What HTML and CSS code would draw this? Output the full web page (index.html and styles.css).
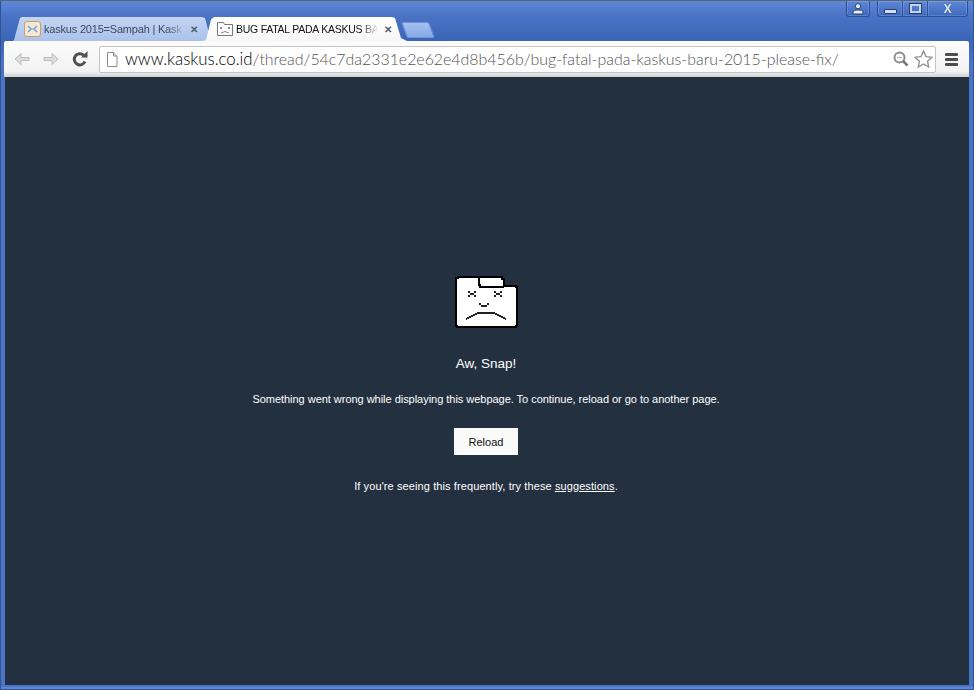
FILE: index.html
```html
<!DOCTYPE html>
<html lang="en">
<head>
    <meta charset="UTF-8">
    <title>BUG FATAL PADA KASKUS BARU 2015</title>
    <link rel="stylesheet" href="styles.css">
</head>
<body>
    <div class="window">
        <!-- caption buttons -->
        <div class="caption">
            <div class="cap-btn cap-profile">
                <svg width="12" height="12" viewBox="0 0 12 12"><circle cx="6" cy="3.200" r="2.600" fill="#e6ecf8" stroke="#24406f"/><path d="M1 11V9.200C1 7.600 3 7 6 7s5 .6 5 2.200V11z" fill="#e6ecf8" stroke="#24406f"/></svg>
            </div>
            <div class="cap-group">
                <div class="cap-btn cap-min"><span class="min-bar"></span></div>
                <div class="cap-btn cap-max"><span class="max-box"></span></div>
                <div class="cap-btn cap-close">X</div>
            </div>
        </div>

        <!-- tab strip -->
        <div class="tabs">
            <div class="tab">
                <svg class="favicon" width="17" height="16" viewBox="0 0 17 16"><rect x=".5" y=".5" width="16" height="15" rx="2.500" fill="#f3e7da" stroke="#d99a58"/><path d="M4 5l3 3-3 3M13 5l-3 3 3 3" fill="none" stroke="#6fa8c8" stroke-width="1.500"/><path d="M6 8h5" stroke="#7fb0cc"/></svg>
                <span class="tab-title">kaskus 2015=Sampah | Kask</span>
                <span class="tab-close">✕</span>
            </div>
            <div class="tab tab-active">
                <svg class="favicon" width="16" height="16" viewBox="0 0 16 16"><path d="M.5 1.500h6l1 2h8v11H.5z" fill="#fff" stroke="#777"/><path d="M3 6l2 2M5 6L3 8M11 6l2 2M13 6l-2 2M4 12q4-3 8 0" fill="none" stroke="#888"/></svg>
                <span class="tab-title">BUG FATAL PADA KASKUS BA</span>
                <span class="tab-close">✕</span>
            </div>
            <div class="new-tab"></div>
        </div>

        <!-- toolbar -->
        <div class="toolbar">
            <div class="nav-btn">
                <svg width="16" height="14" viewBox="0 0 16 14"><path d="M15 5.500H7V1.500L1 7l6 5.500V8.500h8z" fill="#dcdcdc" stroke="#bcbcbc"/></svg>
            </div>
            <div class="nav-btn">
                <svg width="16" height="14" viewBox="0 0 16 14"><path d="M1 5.500h8V1.500L15 7l-6 5.500V8.500H1z" fill="#dcdcdc" stroke="#bcbcbc"/></svg>
            </div>
            <div class="nav-btn">
                <svg width="16" height="16" viewBox="0 0 16 16"><path d="M13 10.500A5.600 5.600 0 1 1 11.500 4" fill="none" stroke="#4e4e4e" stroke-width="3"/><path d="M9 6.500h6.500V0z" fill="#4e4e4e"/></svg>
            </div>
            <div class="omnibox">
                <svg class="page-icon" width="12" height="15" viewBox="0 0 12 15"><path d="M1.500.5h6l3.500 3.500v10.500h-9.500z" fill="#fff" stroke="#8a8a8a"/><path d="M7.500.5v3.500h3.500" fill="#e8e8e8" stroke="#8a8a8a"/></svg>
                <span class="url"><span class="url-host">www.kaskus.co.id</span>/thread/54c7da2331e2e62e4d8b456b/bug-fatal-pada-kaskus-baru-2015-please-fix/</span>
                <svg class="search-icon" width="16" height="16" viewBox="0 0 16 16"><circle cx="6.500" cy="6.500" r="5" fill="none" stroke="#8c8c8c" stroke-width="2"/><path d="M4 6.500h5" stroke="#b5b5b5"/><path d="M10 10l4.500 4.500" stroke="#777" stroke-width="2.500"/></svg>
                <svg class="star-icon" width="19" height="18" viewBox="0 0 19 18"><path d="M9.500 1l2.500 5.600 6 .6-4.500 4 1.300 5.900-5.300-3.100-5.300 3.100 1.300-5.900-4.500-4 6-.6z" fill="#fff" stroke="#8f8f8f" stroke-width="1.300"/></svg>
            </div>
            <div class="menu-btn"><span></span><span></span><span></span></div>
        </div>

        <!-- crashed page -->
        <div class="page">
            <svg class="sad-tab" width="63" height="52" viewBox="0 0 63 52" shape-rendering="crispEdges">
                <path d="M3 1h44v2h2v7h12v1h1v39h-1v1H2v-1H1V2h2z" fill="#fff" stroke="#000" stroke-width="2"/>
                <path d="M24 2v7h1v2h24" fill="none" stroke="#000" stroke-width="2"/>
                <path d="M13 15h2v2h-2zM19 15h2v2h-2zM15 17h4v2h-4zM13 19h2v2h-2zM19 19h2v2h-2zM39 15h2v2h-2zM45 15h2v2h-2zM41 17h4v2h-4zM39 19h2v2h-2zM45 19h2v2h-2z" fill="#222"/>
                <path d="M24 27h2v2h-2zM26 29h6v2h-6zM32 27h2v2h-2z" fill="#222"/>
                <path d="M11 43L23 37H39L51 43" fill="none" stroke="#222" stroke-width="2"/>
            </svg>
            <h1 class="err-title">Aw, Snap!</h1>
            <p class="err-text">Something went wrong while displaying this webpage. To continue, reload or go to another page.</p>
            <button class="reload">Reload</button>
            <p class="err-hint">If you're seeing this frequently, try these <a href="#">suggestions</a>.</p>
        </div>
    </div>
</body>
</html>
```

FILE: styles.css
```css
body {
    margin: 0;
    overflow: hidden;
    font-family: "Liberation Sans", Arial, sans-serif;
}

.window {
    width: 974px;
    height: 690px;
    box-sizing: border-box;
    display: flex;
    flex-direction: column;
    padding: 0 5px 5px 4px;
    background: linear-gradient(#6088d8 0, #4b74c6 14px, #3a64b6 40px, #4a74c6 60px, #4a74c6 100%);
    border-top: 1px solid #55657c;
    box-shadow: inset 1px 0 0 #34528f, inset -1px 0 0 #34528f, inset 0 -1px 0 #34528f, inset 0 -3px 0 #5f86d4;
}

.caption {
    height: 16px;
    display: flex;
    justify-content: flex-end;
    gap: 7px;
}

.cap-group {
    display: flex;
    margin-right: 1px;
}

.cap-btn {
    height: 16px;
    box-sizing: border-box;
    display: flex;
    align-items: center;
    justify-content: center;
    background: linear-gradient(#5f87d6, #3f69bd);
    border: 1px solid #2c4f96;
    border-top: 0;
    box-shadow: inset 0 0 0 1px rgba(255, 255, 255, 0.15);
}

.cap-profile {
    width: 24px;
    border-radius: 0 0 3px 3px;
}

.cap-min {
    width: 25px;
    border-radius: 0 0 0 3px;
    border-right: 0;
    align-items: flex-end;
    padding-bottom: 2px;
}

.cap-max {
    width: 25px;
    border-right: 0;
}

.cap-close {
    width: 41px;
    border-radius: 0 0 3px 0;
    color: #dfe6f5;
    font-size: 12px;
    font-weight: bold;
    text-shadow: 0 0 1px #1d3567;
}

.min-bar {
    width: 11px;
    height: 3px;
    background: #d5deee;
    border: 1px solid #24406f;
    border-radius: 1px;
}

.max-box {
    width: 7px;
    height: 5px;
    border: 2px solid #c6d2e8;
    outline: 1px solid #24406f;
}

.tabs {
    height: 24px;
    display: flex;
    padding-left: 9px;
}

.tab {
    width: 198px;
    height: 24px;
    box-sizing: border-box;
    display: flex;
    align-items: center;
    gap: 3px;
    padding: 0 11px 0 11px;
    font-size: 11px;
    letter-spacing: -0.2px;
    color: #3c4a5e;
    background: linear-gradient(#c4d5f2, #a9c2ec);
    clip-path: polygon(0 100%, 1px 96%, 7px 4%, 9px 0, 189px 0, 192px 4%, 198px 100%);
}

.tab-active {
    width: 204px;
    margin-left: -8px;
    padding-left: 14px;
    padding-right: 17px;
    font-size: 10.500px;
    letter-spacing: -0.25px;
    color: #111;
    background: linear-gradient(#fff, #f7f7f7);
    clip-path: polygon(0 100%, 3px 96%, 8px 10%, 11px 0, 189px 0, 192px 4%, 198px 88%, 204px 100%);
    position: relative;
}

.favicon {
    flex: none;
}

.tab-title {
    flex: 1;
    white-space: nowrap;
    -webkit-mask-image: linear-gradient(to right, #000 88%, transparent);
    mask-image: linear-gradient(to right, #000 88%, transparent);
}

.tab-close {
    flex: none;
    width: 12px;
    font-size: 10px;
    font-weight: bold;
    color: #4f5b6b;
    text-align: center;
}

.new-tab {
    width: 26px;
    height: 14px;
    margin: 5px 0 0 -3px;
    background: linear-gradient(#a7c1ef, #86a9e6);
    border: 1px solid #6f92d6;
    border-radius: 2px;
    transform: skewX(20deg);
}

.toolbar {
    height: 36px;
    box-sizing: border-box;
    display: flex;
    align-items: center;
    padding: 0 10px 0 3px;
    background: linear-gradient(#fcfcfc, #f2f2f2 85%, #cfd2cf);
    border-radius: 2px 2px 0 0;
}

.nav-btn {
    width: 29px;
    display: flex;
    justify-content: center;
}

.omnibox {
    flex: none;
    width: 837px;
    height: 27px;
    box-sizing: border-box;
    margin-left: 5px;
    display: flex;
    align-items: center;
    padding: 0 2px 0 6px;
    background: #fff;
    border: 1px solid #c4c4c4;
    border-radius: 2px;
}

.page-icon {
    flex: none;
}

.url {
    flex: 1;
    margin: 0 0 2px 7px;
    white-space: nowrap;
    font-family: "Lato", sans-serif;
    font-weight: 300;
    font-size: 15.900px;
    color: #555;
}

.url-host {
    font-size: 16.800px;
    color: #000;
}

.search-icon {
    flex: none;
    margin-right: 5px;
}

.star-icon {
    flex: none;
}

.menu-btn {
    margin-left: 9px;
    display: flex;
    flex-direction: column;
    gap: 2px;
}

.menu-btn span {
    display: block;
    width: 13px;
    height: 3px;
    background: #4d4d4d;
    border-radius: 1px;
}

.page {
    flex: 1;
    display: flex;
    flex-direction: column;
    align-items: center;
    margin-left: 1px;
    padding: 199px 1px 0 0;
    margin-right: 0;
    background: #233040;
    color: #fff;
    font-size: 11px;
    transform: translateX(0);
}

.sad-tab {
    display: block;
    margin-left: -1px;
}

.err-title {
    margin: 28px 0 0 -1px;
    font-size: 13.500px;
    font-weight: normal;
    line-height: 16px;
}

.err-text {
    margin: 20px 0 0 -1px;
    line-height: 14px;
    letter-spacing: -0.03px;
}

.reload {
    width: 64px;
    height: 27px;
    margin: 22px 0 0 -1px;
    padding: 0;
    background: #fafafa;
    border: 0;
    color: #111;
    font-family: inherit;
    font-size: 11px;
}

.err-hint {
    margin: 24px 0 0 -1px;
    line-height: 14px;
    letter-spacing: 0.1px;
}

.err-hint a {
    color: #fff;
}
```
